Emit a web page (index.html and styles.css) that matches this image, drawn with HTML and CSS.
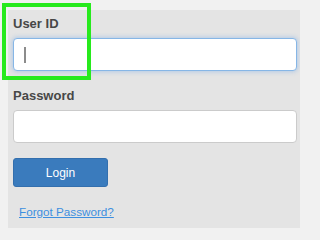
FILE: index.html
```html
<!DOCTYPE html>
<html>
<head>
<meta charset="utf-8">
<link rel="stylesheet" href="styles.css">
</head>
<body>
<div class="panel">
  <div class="label first">User ID</div>
  <div class="field focused"><span class="caret"></span></div>
  <div class="label">Password</div>
  <div class="field"></div>
  <div class="btn">Login</div>
  <a class="link" href="#">Forgot Password?</a>
</div>
<div class="highlight"></div>
</body>
</html>
```
FILE: styles.css
```css
html, body {
  margin: 0;
  padding: 0;
}
body {
  width: 300px;
  height: 228px;
  background: #f1f1f1;
  font-family: "Liberation Sans", Arial, sans-serif;
  overflow: hidden;
  position: relative;
}
.panel {
  margin: 10px 0 0 8px;
  padding: 6px 3px 0 5px;
  width: 292px;
  height: 218px;
  background: #e4e4e4;
  box-sizing: border-box;
  display: flex;
  flex-direction: column;
  align-items: flex-start;
}
.label {
  font-size: 13px;
  font-weight: bold;
  line-height: 16px;
  color: #474747;
  margin-top: 17px;
}
.label.first {
  margin-top: 0;
}
.field {
  margin-top: 6px;
  align-self: stretch;
  height: 33px;
  box-sizing: border-box;
  background: #fff;
  border: 1px solid #cbcbcb;
  border-radius: 4px;
  display: flex;
  align-items: center;
}
.field.focused {
  border-color: #86b6e6;
  box-shadow: 0 0 4px 1px rgba(120, 170, 230, 0.45);
}
.caret {
  margin-left: 10px;
  width: 2px;
  height: 16px;
  background: #8c8c8c;
}
.btn {
  margin-top: 15px;
  width: 95px;
  height: 29px;
  box-sizing: border-box;
  background: #3a7bbd;
  border: 1px solid #336fae;
  border-radius: 3px;
  color: #fff;
  font-size: 12px;
  display: flex;
  align-items: center;
  justify-content: center;
}
.link {
  margin: 18px 0 0 6px;
  font-size: 11.7px;
  line-height: 14px;
  color: #3d8fe0;
  text-decoration: underline;
}
.highlight {
  position: absolute;
  left: 2px;
  top: 3px;
  width: 81px;
  height: 69px;
  border: 4px solid #27ea1d;
}
```
